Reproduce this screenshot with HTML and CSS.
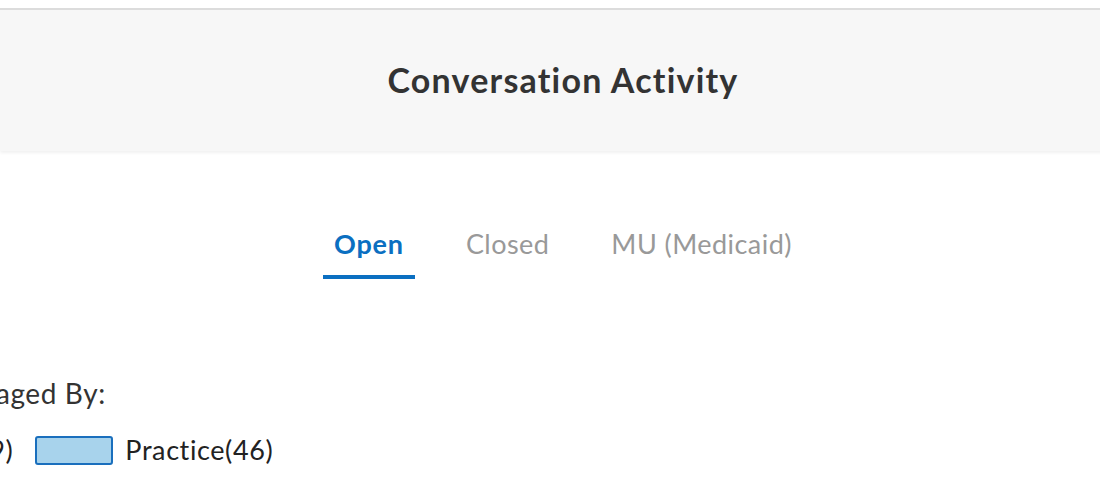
FILE: index.html
```html
<!DOCTYPE html>
<html>
<head>
<meta charset="utf-8">
<link rel="stylesheet" href="styles.css">
</head>
<body>
<div class="page">
  <header class="header">
    <h1 class="title">Conversation Activity</h1>
  </header>
  <nav class="tabs">
    <div class="tab active">Open</div>
    <div class="tab">Closed</div>
    <div class="tab">MU (Medicaid)</div>
  </nav>
  <section class="legend">
    <div class="legend-title">Managed By:</div>
    <div class="legend-row">
      <span class="legend-label">Patient(19)</span>
      <span class="swatch"></span>
      <span class="legend-label">Practice(46)</span>
    </div>
  </section>
</div>
</body>
</html>
```
FILE: styles.css
```css
html, body {
  margin: 0;
  padding: 0;
  background: #ffffff;
  overflow: hidden;
}
body {
  font-family: Lato, "Open Sans", sans-serif;
  font-variant-ligatures: none;
  width: 1100px;
  height: 488px;
}
.page {
  width: 1126px;
  padding-top: 8px;
}
.header {
  border-top: 2px solid #dcdcdc;
  background: #f7f7f7;
  height: 141px;
  box-shadow: 0 2px 3px rgba(0, 0, 0, 0.06);
  display: flex;
  align-items: center;
  justify-content: center;
}
.title {
  margin: 0;
  font-size: 34px;
  letter-spacing: 1.2px;
  font-weight: 700;
  color: #333333;
  line-height: 40px;
  padding-bottom: 2px;
}
.tabs {
  display: flex;
  justify-content: center;
  gap: 40px;
  margin-top: 75px;
}
.tab {
  padding: 0 11px 13px;
  font-size: 27px;
  letter-spacing: 0.45px;
  line-height: 36px;
  color: #999999;
  border-bottom: 4px solid transparent;
}
.tab.active {
  color: #0b6fc1;
  font-weight: 700;
  letter-spacing: 0.8px;
  border-bottom-color: #0b6fc1;
}
.legend {
  margin-top: 96px;
}
.legend-title {
  margin-left: -61px;
  font-size: 28px;
  letter-spacing: 0.6px;
  line-height: 36px;
  color: #333333;
}
.legend-row {
  margin-left: -123px;
  display: flex;
  align-items: center;
  margin-top: 23px;
}
.legend-label {
  font-size: 27px;
  letter-spacing: 0.6px;
  line-height: 32px;
  color: #222222;
}
.swatch {
  width: 74px;
  height: 25px;
  background: #a8d3ec;
  border: 2px solid #1a6fbd;
  border-radius: 3px;
  margin: 0 12px 0 22px;
}
```
